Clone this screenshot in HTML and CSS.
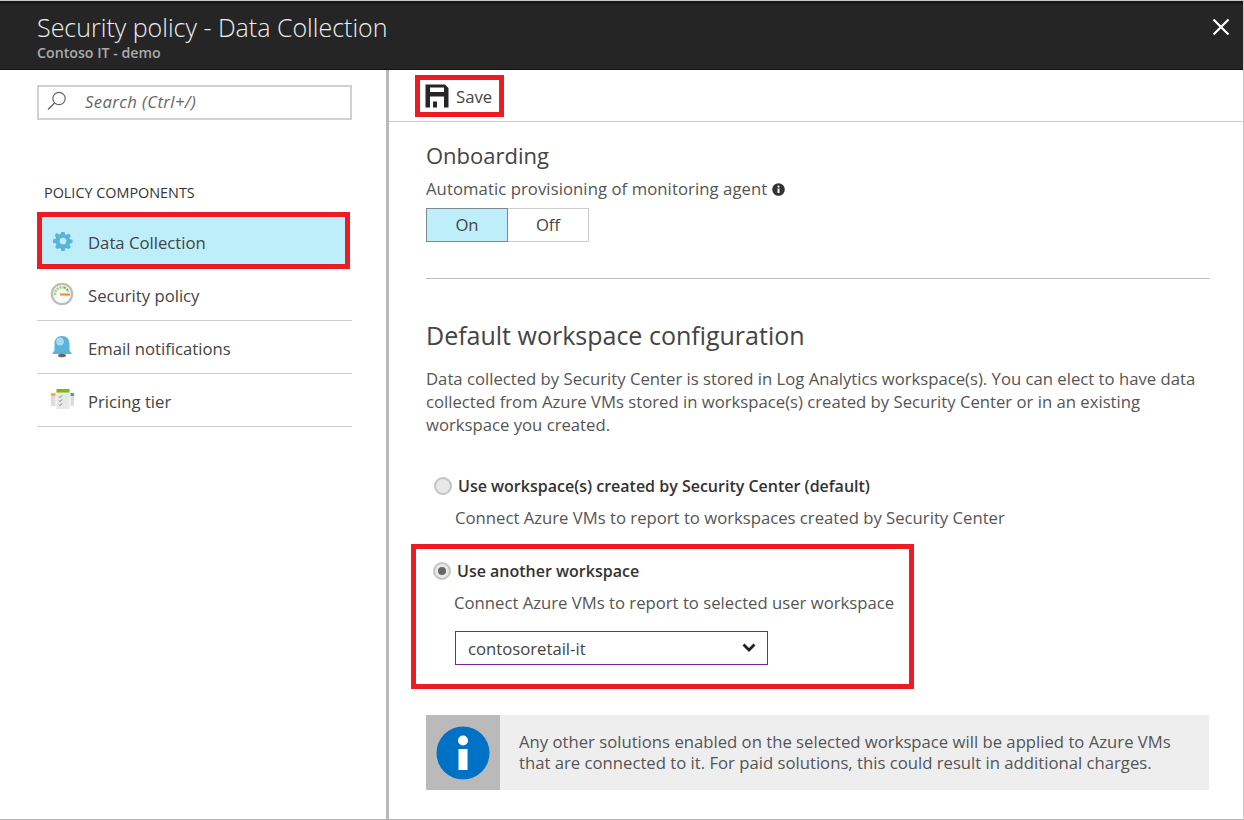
FILE: index.html

```html
<!DOCTYPE html>
<html lang="en">
<head>
  <meta charset="UTF-8" />
  <meta name="viewport" content="width=device-width, initial-scale=1" />
  <title>Security policy - Data Collection</title>
  <link rel="stylesheet" href="styles.css">
</head>
<body>
  <div class="blade">
    <header class="blade-header">
      <div>
        <div class="blade-title">Security policy - Data Collection</div>
        <div class="blade-subtitle">Contoso IT - demo</div>
      </div>
      <svg class="close-icon" width="18" height="18" viewBox="0 0 18 18">
        <path d="M1.5 1.5 L16.5 16.5 M16.5 1.5 L1.5 16.5" stroke="#fff" stroke-width="2.2" fill="none" />
      </svg>
    </header>

    <div class="blade-body">
      <aside class="sidebar">
        <div class="search-box">
          <svg width="22" height="22" viewBox="0 0 22 22">
            <circle cx="13" cy="8.5" r="6.2" stroke="#666" stroke-width="1.2" fill="none" />
            <path d="M8.6 13 L2 19.6" stroke="#666" stroke-width="1.4" fill="none" />
          </svg>
          <span>Search (Ctrl+/)</span>
        </div>

        <div class="nav-label">POLICY COMPONENTS</div>

        <nav class="nav-list">
          <div class="nav-item nav-active">
            <svg class="gear-icon" width="20" height="20" viewBox="0 0 22 22">
              <path fill="#59b4d9" fill-rule="evenodd" d="M9.2 1h3.6l.5 2.7 1.6.7 2.3-1.6 2.5 2.5-1.6 2.3.7 1.6 2.7.5v3.6l-2.7.5-.7 1.6 1.6 2.3-2.5 2.5-2.3-1.6-1.6.7-.5 2.7H9.2l-.5-2.7-1.6-.7-2.3 1.6-2.500-2.500 1.600-2.300-.7-1.600L0 12.800V9.200l2.700-.5.7-1.600-1.600-2.300 2.500-2.500 2.300 1.600 1.600-.7zM11 7.300a3.700 3.700 0 1 0 0 7.400 3.700 3.700 0 0 0 0-7.400z" />
            </svg>
            <span>Data Collection</span>
          </div>
          <div class="nav-item">
            <svg class="nav-icon" width="24" height="24" viewBox="0 0 24 24">
              <circle cx="12" cy="12" r="10.2" fill="#fafafa" stroke="#bdbdbd" stroke-width="2.2" />
              <path d="M5 13 A7 7 0 0 1 14 5.5" stroke="#a9d67e" stroke-width="2.6" stroke-dasharray="2.2 0.8" fill="none" />
              <path d="M14 5.5 A7 7 0 0 1 18.5 10" stroke="#6fb33f" stroke-width="2.2" stroke-dasharray="2 1" fill="none" />
              <path d="M10 12.5 H20" stroke="#f08a24" stroke-width="2" />
            </svg>
            <span>Security policy</span>
          </div>
          <div class="nav-item">
            <svg class="nav-icon" width="24" height="24" viewBox="0 0 24 24">
              <path fill="#59b4d9" d="M12 1c5 0 7.5 3.500 7.500 8v6.500l2.500 3.500H2l2.500-3.500V9C4.500 4.500 7 1 12 1z" />
              <ellipse cx="10" cy="6.500" rx="3.800" ry="4" fill="#a5dcf2" />
              <ellipse cx="12" cy="20.500" rx="4" ry="1.800" fill="#666" />
            </svg>
            <span>Email notifications</span>
          </div>
          <div class="nav-item">
            <svg class="nav-icon" width="24" height="24" viewBox="0 0 24 24">
              <rect x="1" y="6" width="4.500" height="12" fill="#dcdcdc" />
              <rect x="1" y="5" width="4.500" height="3" fill="#fcb034" />
              <rect x="20.500" y="6" width="3.500" height="12" fill="#dcdcdc" />
              <rect x="20.500" y="5" width="3.500" height="3" fill="#3f9bd9" />
              <rect x="6.500" y="3" width="13" height="18" fill="#e8e8e8" />
              <rect x="6.500" y="1" width="13" height="3.500" fill="#7fba00" />
              <path d="M9 8.500l1 1 2-2M9 12.500l1 1 2-2M9 16.500l1 1 2-2" stroke="#7a7a7a" stroke-width="1" fill="none" />
            </svg>
            <span>Pricing tier</span>
          </div>
        </nav>
      </aside>

      <main class="content">
        <div class="toolbar">
          <div class="save-button">
            <svg width="24" height="24" viewBox="0 0 24 24">
              <path fill="#262626" fill-rule="evenodd" d="M.5.5H20L23.500 4V23.500H19V12.500H5V23.500H.5ZM5 3.500V8H19V3.500Z" />
              <rect x="8" y="17.500" width="4" height="6" fill="#262626" />
            </svg>
            <span>Save</span>
          </div>
        </div>

        <div class="content-inner">
          <h2 class="section-small">Onboarding</h2>
          <div class="field-label">
            Automatic provisioning of monitoring agent
            <svg width="13" height="13" viewBox="0 0 13 13">
              <circle cx="6.5" cy="6.5" r="6.3" fill="#333" />
              <rect x="5.5" y="5.500" width="2" height="4.500" fill="#fff" />
              <circle cx="6.5" cy="3.6" r="1.1" fill="#fff" />
            </svg>
          </div>
          <div class="toggle">
            <div class="toggle-option toggle-on">On</div>
            <div class="toggle-option">Off</div>
          </div>

          <hr class="divider">

          <h2 class="section-title">Default workspace configuration</h2>
          <p class="description">Data collected by Security Center is stored in Log Analytics workspace(s). You can elect to have data collected from Azure VMs stored in workspace(s) created by Security Center or in an existing workspace you created.</p>

          <div class="option option-default">
            <div class="option-head">
              <span class="radio"></span>
              <span class="option-name">Use workspace(s) created by Security Center (default)</span>
            </div>
            <div class="option-note">Connect Azure VMs to report to workspaces created by Security Center</div>
          </div>

          <div class="option option-picked">
            <div class="option-head">
              <span class="radio radio-checked"></span>
              <span class="option-name">Use another workspace</span>
            </div>
            <div class="option-note">Connect Azure VMs to report to selected user workspace</div>
            <div class="select-box">
              <span>contosoretail-it</span>
              <svg width="14" height="10" viewBox="0 0 14 10">
                <path d="M1.5 1.5 L7 7 L12.5 1.5" stroke="#1f1f1f" stroke-width="2.8" fill="none" />
              </svg>
            </div>
          </div>

          <div class="info-bar">
            <div class="info-icon">
              <svg width="54" height="54" viewBox="0 0 54 54">
                <circle cx="27" cy="27" r="26.5" fill="#0072c6" />
                <circle cx="27" cy="14.5" r="5" fill="#fff" />
                <rect x="22.5" y="23" width="9" height="21" fill="#fff" />
              </svg>
            </div>
            <div class="info-text">Any other solutions enabled on the selected workspace will be applied to Azure VMs that are connected to it. For paid solutions, this could result in additional charges.</div>
          </div>
        </div>
      </main>
    </div>
  </div>
</body>
</html>
```

FILE: styles.css

```css
html, body {
  margin: 0;
  padding: 0;
  height: 100%;
}
body {
  background-color: #fff;
  font-family: "Open Sans", "Noto Sans", sans-serif;
  color: #3c3c3c;
  font-size: 16.7px;
}
.blade {
  box-sizing: border-box;
  width: 1244px;
  height: 820px;
  display: flex;
  flex-direction: column;
  border-top: 1px solid #c8c8c8;
  border-right: 1px solid #c8c8c8;
  border-bottom: 1px solid #b4b4b4;
  overflow: hidden;
}
.blade-header {
  height: 69px;
  flex: none;
  box-sizing: border-box;
  background-color: #252525;
  border-top: 3px solid #1a1a1a;
  border-bottom: 1px solid #111;
  display: flex;
  justify-content: space-between;
  padding: 7px 13px 0 37px;
  color: #fff;
}
.blade-title {
  font-size: 25px;
  line-height: 33px;
  font-weight: 300;
  color: #eee;
}
.blade-subtitle {
  font-size: 14.2px;
  line-height: 17px;
  font-weight: 600;
  color: #aaa;
}
.close-icon {
  margin-top: 7px;
}
.blade-body {
  flex: 1;
  display: flex;
  min-height: 0;
}
.sidebar {
  width: 389px;
  flex: none;
  box-sizing: border-box;
  border-right: 3px solid #b9b9b9;
  padding: 15px 34px 0 37px;
}
.search-box {
  box-sizing: border-box;
  width: 315px;
  height: 35px;
  border: 2px solid #d0d0d0;
  display: flex;
  align-items: center;
  padding: 0 0 3px 7px;
  gap: 17px;
  font-style: italic;
  font-size: 16.7px;
  letter-spacing: 0.4px;
  color: #666;
}
.nav-label {
  margin-top: 64px;
  margin-left: 7px;
  font-size: 14.4px;
  line-height: 18px;
  color: #333;
}
.nav-list {
  margin-top: 10px;
}
.nav-item {
  box-sizing: border-box;
  height: 53px;
  display: flex;
  align-items: center;
  border-bottom: 1px solid #ccc;
  padding-left: 13px;
  gap: 14px;
  color: #444;
}
.nav-item span {
  padding-top: 2px;
}
.nav-icon {
  flex: none;
  width: 24px;
}
.gear-icon {
  flex: none;
}
.nav-active {
  width: 313px;
  height: 57px;
  margin-bottom: -1px;
  background-color: #bdeefa;
  border: 5px solid #ed1c24;
  padding-left: 11px;
  gap: 15px;
}
.nav-active span {
  padding-top: 3px;
}
.content {
  flex: 1;
  min-width: 0;
}
.toolbar {
  height: 52px;
  box-sizing: border-box;
  border-bottom: 1px solid #ccc;
  padding: 5px 0 0 26px;
}
.save-button {
  box-sizing: border-box;
  width: 89px;
  height: 42px;
  border: 5px solid #ed1c24;
  display: flex;
  align-items: center;
  padding-left: 5px;
  gap: 7px;
  color: #444;
}
.content-inner {
  padding: 19px 33px 0 37px;
}
.section-small {
  margin: 0;
  font-size: 22px;
  line-height: 29px;
  font-weight: 400;
  color: #444;
}
.field-label {
  margin-top: 9px;
  display: flex;
  align-items: center;
  gap: 5px;
  line-height: 20px;
  letter-spacing: 0.07px;
  color: #555;
}
.toggle {
  margin-top: 9px;
  display: flex;
  width: 163px;
  height: 34px;
  box-sizing: border-box;
}
.toggle-option {
  box-sizing: border-box;
  width: 81px;
  display: flex;
  align-items: center;
  justify-content: center;
  border: 1px solid #ccc;
  border-left: 0;
  padding-bottom: 2px;
  color: #444;
}
.toggle-on {
  width: 82px;
  background-color: #bdeefa;
  border: 1px solid #7b8a90;
}
.divider {
  margin: 36px 0 0;
  border: 0;
  border-top: 1px solid #bbb;
}
.section-title {
  margin: 40px 0 0;
  font-size: 25px;
  line-height: 32px;
  font-weight: 400;
  color: #444;
}
.description {
  margin: 16px 0 0;
  width: 780px;
  line-height: 23px;
  color: #555;
}
.option-default {
  margin: 40px 0 0 8px;
}
.option-head {
  display: flex;
  align-items: center;
  gap: 6px;
}
.radio {
  box-sizing: border-box;
  width: 18px;
  height: 18px;
  border-radius: 50%;
  border: 2px solid #c4c4c4;
  background-color: #e8e8e8;
  position: relative;
}
.radio-checked::after {
  content: "";
  position: absolute;
  left: 3px;
  top: 3px;
  width: 8px;
  height: 8px;
  border-radius: 50%;
  background-color: #666;
}
.option-name {
  font-size: 16px;
  font-weight: 600;
  line-height: 20px;
  color: #333;
}
.option-note {
  margin: 12px 0 0 21px;
  line-height: 20px;
  color: #555;
}
.option-picked {
  box-sizing: border-box;
  width: 503px;
  height: 145px;
  margin: 16px 0 0 -15px;
  border: 5px solid #ed1c24;
  padding: 12px 0 0 17px;
}
.select-box {
  box-sizing: border-box;
  width: 313px;
  height: 34px;
  margin: 18px 0 0 22px;
  border: 1px solid #7f1fa5;
  display: flex;
  align-items: center;
  justify-content: space-between;
  padding: 0 11px 0 12px;
  color: #444;
}
.info-bar {
  margin: 26px 1px 0 0;
  height: 75px;
  display: flex;
  background-color: #eee;
}
.info-icon {
  width: 74px;
  flex: none;
  background-color: #bababa;
  display: flex;
  align-items: center;
  justify-content: center;
}
.info-text {
  padding: 16px 30px 0 19px;
  line-height: 21px;
  color: #555;
}
```
